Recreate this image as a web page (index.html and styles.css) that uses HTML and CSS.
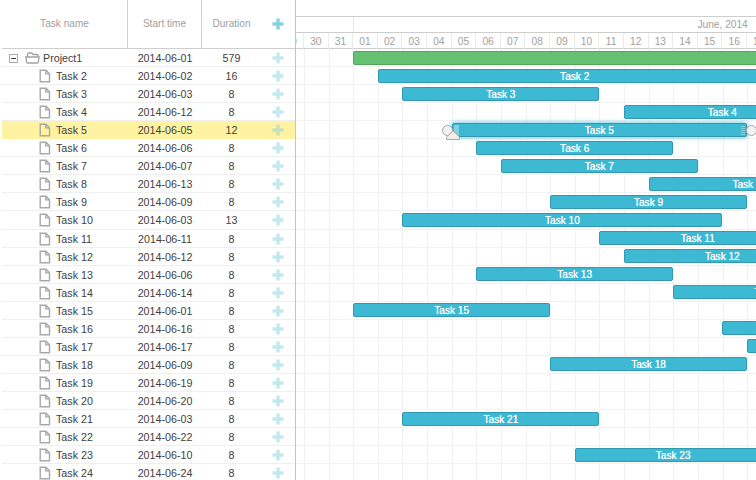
FILE: index.html
```
<!DOCTYPE html>
<html lang="en">
<head>
<meta charset="utf-8">
<title>Gantt</title>
<link rel="stylesheet" href="styles.css">
</head>
<body>
<svg class="defs" width="0" height="0">
  <symbol id="plus" viewBox="0 0 12 12"><path d="M4.3 .5h3.4v3.8h3.8v3.4H7.700v3.800H4.300V7.700H.5V4.300h3.800z"/></symbol>
  <symbol id="file" viewBox="0 0 12 14"><path d="M1.200 1.200h5.800l3.500 3.500v8.100H1.200zM6.800 1.200v3.700h3.700" fill="none" stroke="#a8a8a8" stroke-width="1.400"/></symbol>
  <symbol id="folder" viewBox="0 0 15 12"><path d="M2.600 5V2.200q0-1.200 1.200-1.200h3l1.200 1.500h4.200q1 0 1 1V5M.8 5h13.300l-.8 5.200q-.1.800-1 .8H2.600q-.9 0-1-.8z" fill="none" stroke="#a3a3a3" stroke-width="1.300"/></symbol>
</svg>
<main class="gantt">
  <section class="grid">
    <header class="grid-head">
      <div class="name">Task name</div><div class="date">Start time</div><div class="dur">Duration</div>
      <div class="add"><svg><use href="#plus"/></svg></div>
    </header>
    <div id="rows"></div>
  </section>
  <section class="timeline">
    <header class="scale">
      <div class="blank"></div>
      <div class="months"><div class="may"></div><div class="june">June, 2014</div></div>
      <div class="days" id="days"></div>
    </header>
    <div class="chart" id="chart"></div>
  </section>
</main>
<script src="gantt.js"></script>
</body>
</html>
```
FILE: styles.css
```
* { box-sizing: border-box; }
body { margin: 0; background: #fff; overflow: hidden; font: 10.7px/18px "Liberation Sans", Arial, sans-serif; color: #404040; }
.defs { position: absolute; }
.gantt { display: flex; width: 756px; height: 480px; overflow: hidden; }
.grid { width: 296px; flex: none; padding-left: 2px; border-right: 1px solid #c4c4c4; }
.grid-head, .row { display: grid; grid-template-columns: 126px 74px 59px 34px; }
.grid-head { height: 49.2px; border-bottom: 1px solid #cecece; color: #a0a0a0; font-size: 10.1px; line-height: 48px; text-align: center; }
.grid-head .name, .grid-head .date { border-right: 1px solid #d2d2d2; }
.add { display: flex; align-items: center; justify-content: center; }
.add svg { width: 12px; height: 12px; fill: #c4e8ef; }
.grid-head .add svg { fill: #86d2df; }
.row { height: 18.04px; border-bottom: 1px solid #efefef; text-align: center; }
.row .name { display: flex; align-items: center; padding-left: 37px; text-align: left; }
.row .add { height: 18px; }
.file { width: 12px; height: 14px; margin-right: 5px; }
.row.project .name { padding-left: 7px; }
.toggle { width: 9px; height: 9px; border: 1px solid #a8a8a8; margin-right: 7px; display: flex; align-items: center; justify-content: center; }
.toggle::before { content: ""; width: 5px; height: 1px; background: #444; }
.folder { width: 15px; height: 12px; margin-right: 3px; }
.row.selected { background: #fff3a1; border-color: #fff3a1; }
.row.selected .add svg { fill: #c3e2bd; }
.timeline { width: 460px; overflow: hidden; }
.scale { height: 49.2px; border-bottom: 1px solid #cecece; color: #a0a0a0; }
.blank { height: 17px; border-bottom: 1px solid #cecece; }
.months { display: flex; height: 16px; border-bottom: 1px solid #cecece; line-height: 16px; font-size: 10.2px; }
.may { width: 57.600px; flex: none; border-right: 1px solid #e6e6e6; }
.june { width: 738px; flex: none; text-align: center; }
.days, .lane { display: grid; grid-template-columns: 8px repeat(50, 24.620px); }
.days { height: 15.200px; line-height: 17px; font-size: 10.2px; text-align: center; }
.days div { border-right: 1px solid #ebebeb; }
.days div:first-child { display: flex; justify-content: flex-end; padding-right: 6px; overflow: hidden; }
.lane { width: 1240px; height: 18.04px; padding-top: 1.700px; border-bottom: 1px solid #f2f2f2; background: repeating-linear-gradient(90deg, #f1f1f1 0 1px, transparent 1px 24.620px) 7.600px 0 no-repeat; }
.bar { height: 14px; position: relative; border: 1px solid #3098b0; border-radius: 2px; background: #3db9d3; color: #fff; font-size: 10.1px; line-height: 13px; text-align: center; text-shadow: 0 0 .5px #fff; }
.bar.project { border-color: #54a55a; background: #65c16f; }
.bar.selected { box-shadow: 0 0 5px #3db9d3; }
.bar.selected::before, .bar.selected::after { content: ""; position: absolute; top: 1px; bottom: 1px; width: 5px; background: #82d0e0; }
.bar.selected::before { left: 1px; }
.bar.selected::after { right: 1px; width: 4px; background: repeating-linear-gradient(#3db9d3 0 1px, #82d0e0 1px 2px); }
.link { position: absolute; top: 1px; width: 11px; height: 11px; border: 1px solid #a5a5a5; border-radius: 50%; background: #f3f3f3; }
.link.start { left: -11px; }
.link.end { right: -11px; }
.progress { position: absolute; left: -7px; top: 6px; width: 14px; height: 10px; z-index: 1; fill: #f1eeea; stroke: #a8a8a8; }
```
FILE: gantt.js
```
// [start day in June, duration in days]
const tasks = [[1, 579], [2, 16], [3, 8], [12, 8], [5, 12], [6, 8], [7, 8], [13, 8],
  [9, 8], [3, 13], [11, 8], [12, 8], [6, 8], [14, 8], [1, 8], [16, 8], [17, 8], [9, 8],
  [19, 8], [20, 8], [3, 8], [22, 8], [10, 8], [24, 8]];
const pad = n => String(n).padStart(2, '0');
const icon = (id, cls = '') => `<svg class="${cls}"><use href="#${id}"/></svg>`;

let rows = '', lanes = '';
tasks.forEach(([start, length], i) => {
  const project = i === 0;
  const selected = i === 4;
  const state = project ? ' project' : selected ? ' selected' : '';
  const name = project ? 'Project1' : `Task ${i + 1}`;
  const lead = project ? '<span class="toggle"></span>' + icon('folder', 'folder') : icon('file', 'file');
  rows += `<div class="row${state}"><div class="name">${lead}${name}</div><div class="date">2014-06-${pad(start)}</div><div class="dur">${length}</div><div class="add">${icon('plus')}</div></div>`;
  const handles = selected ? '<i class="link start"></i><i class="link end"></i><svg class="progress" viewBox="0 0 14 10"><path d="M.5 9.500V7L7 .8 13.500 7v2.500z"/></svg>' : '';
  const bar = start < 18 ? `<div class="bar${state}" style="grid-column: ${start + 3} / span ${Math.min(length, 40)}">${project ? '' : name}${handles}</div>` : '';
  lanes += `<div class="lane">${bar}</div>`;
});
document.getElementById('rows').innerHTML = rows;
document.getElementById('chart').innerHTML = lanes;

const days = [29, 30, 31];
for (let d = 1; d < 19; d++) days.push(pad(d));
document.getElementById('days').innerHTML = days.map(d => `<div>${d}</div>`).join('');
```
